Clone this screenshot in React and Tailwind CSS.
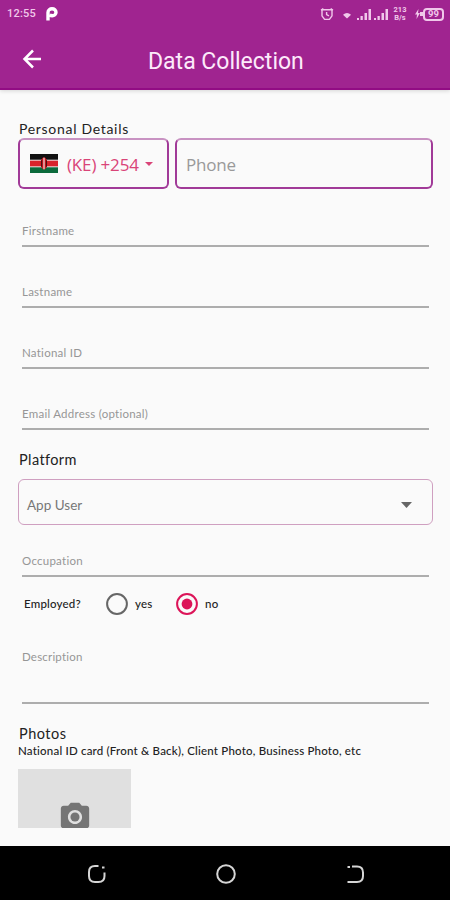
const fields = ['Firstname', 'Lastname', 'National ID', 'Email Address (optional)'];

function AlarmIcon() {
  return (
    <svg width="14" height="14" viewBox="0 0 14 14" fill="none" stroke="currentColor" strokeWidth="1.4">
      <path d="M1 3.200 3.300 1.500M13 3.200 10.700 1.500" />
      <path d="M2 2.800h10v6L9.400 12.400H4.600L2 8.800z" strokeLinejoin="round" />
      <path d="M6.600 5v2.600l2.400 1.200" />
    </svg>
  );
}

function SignalIcon() {
  return (
    <svg width="16" height="13" viewBox="0 0 16 13" fill="currentColor">
      <path d="M1 10h2v2H1zM4.500 8h2.300v4H4.500zM8.500 5h2.500v7H8.500zM12.500 1H15v11h-2.500z" />
    </svg>
  );
}

function StatusBar() {
  return (
    <div className="flex h-7 items-center justify-between pl-[7px] pr-[6px] text-[#f0c8ea]">
      <div className="flex items-center gap-[10px]">
        <span className="text-[11px] font-medium tracking-[0.2px]">12:55</span>
        <svg width="12" height="14" viewBox="0 0 12 14" fill="none" stroke="#fff" strokeWidth="3.400">
          <path d="M2 13.500V5.500C2 3 4 1.800 6 1.800c2.400 0 4 1.500 4 3.400 0 2.200-1.700 3.600-3.800 3.600-1 0-1.900-.3-2.600-.8" />
        </svg>
      </div>
      <div className="flex items-center">
        <AlarmIcon />
        <svg width="8" height="7" viewBox="0 0 9 7" fill="currentColor" className="ml-[9px] mr-[5px] mt-[3px]">
          <path d="M0 2.600Q4.500-1.400 9 2.600L4.500 7z" />
        </svg>
        <SignalIcon />
        <span className="w-px" />
        <SignalIcon />
        <div className="ml-[4px] mr-[7px] w-[14px] text-center text-[7.500px] leading-[8px] font-bold">
          <div>213</div>
          <div>B/s</div>
        </div>
        <svg width="9" height="14" viewBox="0 0 9 14" fill="currentColor">
          <path d="M4.500 2 1 7.500h2L2.500 12 6 6H4z" />
          <path d="M6 5h3v4H6z" />
        </svg>
        <div className="flex h-[13px] w-[21px] items-center justify-center rounded-[4px] border-2 border-[#f0c8ea] text-[9.500px] leading-none font-bold">
          99
        </div>
      </div>
    </div>
  );
}

function AppBar() {
  return (
    <div className="flex h-[62px] items-center border-b-2 border-[#920c84] pl-[22px] text-[#fdeafb]">
      <svg width="20" height="20" viewBox="0 0 20 20" fill="none" stroke="#fff" strokeWidth="2.500" className="mt-[2px]">
        <path d="M19 10H2.500M11 1.500 2.500 10l8.500 8.500" />
      </svg>
      <h1 className="ml-[106px] mt-[6px] text-[23px] leading-none whitespace-nowrap">Data Collection</h1>
    </div>
  );
}

function KenyaFlag() {
  return (
    <svg width="28" height="19" viewBox="0 0 28 20" preserveAspectRatio="none">
      <rect width="28" height="20" fill="#eee" />
      <rect width="28" height="6" fill="#111" />
      <rect y="7" width="28" height="6" fill="#d9232b" />
      <rect y="14" width="28" height="6" fill="#0c6b3c" />
      <ellipse cx="14" cy="10" rx="3.300" ry="6.500" fill="#c9141e" />
      <path d="M14 4v12" stroke="#f5e5e0" strokeWidth="1.200" />
      <path d="M11.600 6.500v7M16.400 6.500v7" stroke="#2b1010" strokeWidth=".9" />
    </svg>
  );
}

function Field({ label }) {
  return (
    <div className="mx-[4px] flex h-[61px] items-end border-b-2 border-[#adadad] pb-[5px] text-[11.500px] leading-[18px] tracking-[0.25px] text-[#969696]">
      {label}
    </div>
  );
}

function Radio({ label, checked }) {
  return (
    <div className="flex items-center gap-[7px]">
      <svg width="22" height="22" viewBox="0 0 22 22" fill="none" className={checked ? 'text-[#dc1458]' : 'text-[#666]'}>
        <circle cx="11" cy="11" r="9.900" stroke="currentColor" strokeWidth="2" />
        {checked && <circle cx="11" cy="11" r="5.400" fill="currentColor" />}
      </svg>
      {label}
    </div>
  );
}

function NavigationBar() {
  return (
    <div className="flex h-[54px] items-center bg-black pl-[87px] pt-px text-[#d5d5d5]">
      <svg width="20" height="20" viewBox="0 0 20 20" fill="none" stroke="currentColor" strokeWidth="2">
        <path d="M11.500 2H8Q2 2 2 8v4q0 6 6 6h3.500q6 0 6-6V8.500" />
        <path d="M15 3.500h2.500" />
      </svg>
      <svg width="22" height="22" viewBox="0 0 22 22" fill="none" stroke="currentColor" strokeWidth="2" className="ml-[108px]">
        <circle cx="11" cy="11" r="8.800" />
      </svg>
      <svg width="20" height="20" viewBox="0 0 20 20" fill="none" stroke="currentColor" strokeWidth="2" className="ml-[109px]">
        <path d="M6 2.500h5q6 0 6 6V12q0 6-6 6H1.500M1.500 3H4" />
      </svg>
    </div>
  );
}

function App() {
  return (
    <div className="flex h-[900px] w-[450px] flex-col overflow-hidden bg-[#fafafa] font-['Lato','Liberation_Sans',sans-serif]">
      <header className="h-[90px] shrink-0 bg-[#a02490] font-[Roboto,sans-serif] shadow-[0_1px_4px_rgba(0,0,0,0.15)]">
        <StatusBar />
        <AppBar />
      </header>

      <main className="h-[738px] shrink-0 overflow-hidden pl-[18px] pr-[17px] pt-[30px] text-[#222]">
        <h2 className="h-[18px] pl-px text-[14px] leading-[18px] tracking-[0.7px]">Personal Details</h2>
        <div className="flex h-[51px] gap-[6px] font-['Open_Sans',sans-serif]">
          <div className="flex w-[151px] items-center rounded-[6px] border-2 border-[#a13a98] border-t-[#c892c2] pl-[10px] text-[17px] text-[#d94478]">
            <KenyaFlag />
            <span className="ml-[9px] mt-[2px] whitespace-nowrap tracking-[-0.15px]">(KE) +254</span>
            <svg width="8" height="4" viewBox="0 0 8 4" fill="currentColor" className="ml-auto mr-[14px]">
              <path d="M0 0h8L4 4z" />
            </svg>
          </div>
          <div className="flex flex-1 items-center rounded-[6px] border-2 border-[#a13a98] border-t-[#c892c2] pl-[9px] pt-[2px] text-[17px] tracking-[-0.2px] text-[#999]">
            Phone
          </div>
        </div>

        <div className="-mt-[3px]">
          {fields.map(label => <Field key={label} label={label} />)}
        </div>

        <h2 className="mt-[20px] h-[29px] pl-px text-[14.500px] leading-[20px] tracking-[0.400px]">Platform</h2>
        <div className="flex h-[46px] items-center rounded-[6px] border-[1.500px] border-[#cf9fc0] pl-[8px] pr-[20px] text-[13.500px] leading-[18px] text-[#777]">
          <span className="mt-[5px]">App User</span>
          <svg width="11" height="6" viewBox="0 0 11 6" className="ml-auto mt-[5px] fill-[#666]">
            <path d="M0 0h11L5.500 6z" />
          </svg>
        </div>

        <div className="-mt-[9px]">
          <Field label="Occupation" />
        </div>
        <div className="flex h-[54px] items-center pl-[6px] text-[11.500px] leading-[18px] font-medium tracking-[0.2px]">
          <span className="w-[57px]">Employed?</span>
          <div className="ml-[25px] w-[47px]"><Radio label="yes" /></div>
          <div className="ml-[23px]"><Radio label="no" checked /></div>
        </div>

        <div className="mx-[4px] mt-[16px] h-[57px] border-b-2 border-[#adadad] pt-px text-[11.500px] leading-[18px] tracking-[0.2px] text-[#969696]">
          Description
        </div>

        <h2 className="mt-[20px] h-[18px] pl-px text-[14.500px] leading-[19px] tracking-[0.5px]">Photos</h2>
        <p className="h-[27px] text-[11.500px] leading-[18px] font-medium tracking-[0.200px] whitespace-nowrap">
          National ID card (Front &amp; Back), Client Photo, Business Photo, etc
        </p>
        <div className="flex h-[76px] w-[113px] justify-center bg-[#e0e0e0] pt-[31px]">
          <svg width="34" height="34" viewBox="0 0 24 24" className="fill-[#757575]">
            <circle cx="12" cy="12" r="3.200" />
            <path d="M9 2 7.170 4H4c-1.100 0-2 .9-2 2v12c0 1.100.9 2 2 2h16c1.100 0 2-.9 2-2V6c0-1.100-.9-2-2-2h-3.170L15 2H9zm3 15c-2.760 0-5-2.240-5-5s2.240-5 5-5 5 2.240 5 5-2.240 5-5 5z" />
          </svg>
        </div>
      </main>
      <div className="h-[18px] shrink-0" />
      <NavigationBar />
    </div>
  );
}

export default App;
